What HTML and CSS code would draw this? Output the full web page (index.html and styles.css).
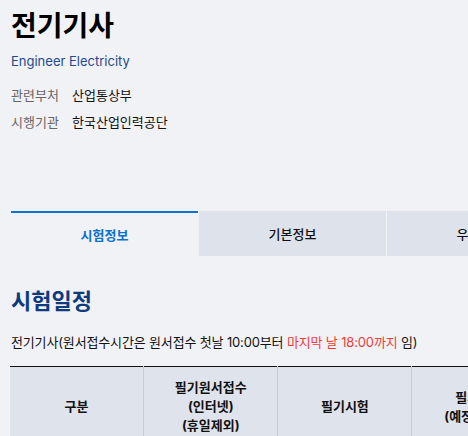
FILE: index.html
```html
<!DOCTYPE html>
<html lang="ko">
<head>
<meta charset="utf-8">
<title>전기기사</title>
<link rel="stylesheet" href="styles.css">
</head>
<body>
<div class="page">
  <header class="head">
    <h1 class="title">전기기사</h1>
    <p class="subtitle">Engineer Electricity</p>
    <dl class="meta">
      <div class="meta-row"><dt>관련부처</dt><dd>산업통상부</dd></div>
      <div class="meta-row"><dt>시행기관</dt><dd>한국산업인력공단</dd></div>
    </dl>
  </header>

  <nav class="tabs">
    <a class="tab active">시험정보</a>
    <a class="tab">기본정보</a>
    <a class="tab">우대현황</a>
  </nav>

  <section class="schedule">
    <h2 class="section-title">시험일정</h2>
    <p class="note">전기기사(원서접수시간은 원서접수 첫날 10:00부터 <span class="red">마지막 날 18:00까지</span> 임)</p>
    <table class="sched-table">
      <thead>
        <tr>
          <th>구분</th>
          <th>필기원서접수<br>(인터넷)<br>(휴일제외)</th>
          <th>필기시험</th>
          <th>필기합격<br>(예정자)발표</th>
          <th>실기원서접수<br>(휴일제외)</th>
          <th>실기시험</th>
        </tr>
      </thead>
    </table>
  </section>
</div>
</body>
</html>
```

FILE: styles.css
```css
html, body {
  margin: 0;
  padding: 0;
  overflow: hidden;
}
body {
  background: #f1f2f6;
  font-family: Inter, "Noto Sans CJK KR", "Noto Sans", sans-serif;
  color: #111;
  width: 468px;
  height: 436px;
}
.page {
  padding: 8px 0 0 11px;
  width: 1000px;
}
.title {
  margin: 0;
  font-size: 28px;
  line-height: 36px;
  font-weight: 700;
  color: #000;
}
.subtitle {
  margin: 8px 0 0;
  font-size: 13px;
  line-height: 18px;
  color: #1d4c8c;
}
.meta {
  margin: 11px 0 0;
}
.meta-row {
  display: flex;
  height: 27px;
  align-items: center;
  font-size: 13px;
}
.meta-row dt {
  width: 61px;
  color: #666;
}
.meta-row dd {
  margin: 0;
  color: #111;
}
.tabs {
  display: flex;
  gap: 1px;
  margin-top: 76px;
}
.tab {
  width: 187px;
  height: 45px;
  box-sizing: border-box;
  display: flex;
  align-items: center;
  justify-content: center;
  background: #dee2ea;
  font-size: 13px;
  font-weight: 500;
  color: #111;
}
.tab.active {
  background: transparent;
  border-top: 2px solid #0a75d2;
  color: #0a6fcf;
  font-weight: 700;
}
.section-title {
  margin: 30px 0 0;
  font-size: 22px;
  line-height: 30px;
  font-weight: 700;
  color: #0e3b80;
}
.note {
  margin: 17px 0 0;
  font-size: 13px;
  line-height: 18px;
  letter-spacing: -0.15px;
  color: #111;
}
.red {
  color: #f33a3a;
}
.sched-table {
  margin: 15px 0 0 -1px;
  border-collapse: collapse;
  table-layout: fixed;
  width: 804px;
  border-top: 1px solid #111;
}
.sched-table th {
  width: 125px;
  background: #dfe3eb;
  border-left: 1px solid #c9ccd2;
  font-size: 13px;
  line-height: 19px;
  font-weight: 700;
  padding: 11px 4px 14px;
  color: #111;
}
.sched-table th:first-child {
  border-left: none;
}
```
